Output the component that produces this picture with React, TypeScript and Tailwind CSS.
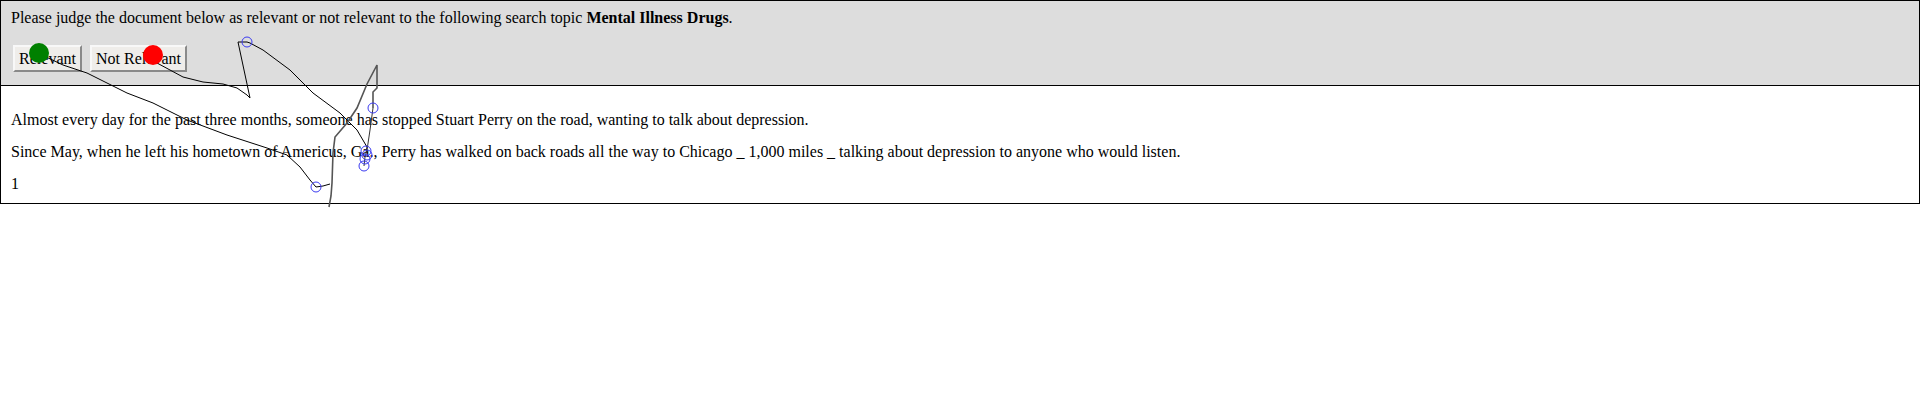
import React from "react";

type Point = [number, number];

const trails: { points: Point[]; className: string }[] = [
  {
    points: [
      [39, 53], [42, 55], [63, 65], [87, 73], [127, 93], [153, 103], [187, 120],
      [227, 135], [267, 148], [287, 155], [300, 167], [310, 180], [316, 187],
    ],
    className: "stroke-black",
  },
  {
    points: [
      [153, 55], [157, 63], [170, 70], [183, 77], [203, 82], [223, 84], [237, 88],
      [247, 95], [250, 98], [238, 42], [247, 42],
    ],
    className: "stroke-black",
  },
  {
    points: [
      [247, 42], [250, 43], [263, 50], [290, 70], [313, 93], [340, 113], [357, 130],
      [367, 147], [366, 153],
    ],
    className: "stroke-black",
  },
  {
    points: [[316, 187], [323, 186], [330, 184]],
    className: "stroke-black",
  },
  {
    points: [
      [329, 207], [331, 196], [332, 183], [333, 153], [335, 137], [347, 123],
      [357, 108], [367, 84], [377, 65], [377, 88], [373, 92], [373, 108],
    ],
    className: "stroke-[#555555]",
  },
  {
    points: [[373, 108], [370, 130], [367, 150], [365, 157], [364, 166]],
    className: "stroke-[#333333]",
  },
];

const stops: Point[] = [
  [247, 42],
  [373, 108],
  [316, 187],
  [366, 151],
  [367, 155],
  [365, 159],
  [364, 166],
];

function MouseTrail() {
  return (
    <svg
      className="pointer-events-none absolute top-0 left-0"
      width={1920}
      height={400}
      viewBox="0 0 1920 400"
    >
      {trails.map((trail, index) => (
        <polyline
          key={index}
          points={trail.points.map((p) => p.join(",")).join(" ")}
          fill="none"
          strokeWidth={index === 4 ? 1.6 : 1}
          className={trail.className}
        />
      ))}
      {stops.map(([cx, cy], index) => (
        <circle key={index} cx={cx} cy={cy} r={5} fill="none" stroke="#3b3bf0" strokeWidth={1} />
      ))}
      <circle cx={39} cy={53} r={10} fill="#008000" />
      <circle cx={153} cy={55} r={10} fill="#ff0000" />
    </svg>
  );
}

const buttonClass =
  "h-[27px] border-[2px] border-t-[#f8f8f8] border-r-[#8a8a8a] border-b-[#8a8a8a] border-l-[#f8f8f8] bg-[#efedea] px-0 text-center leading-[18px]";

export default function App() {
  return (
    <div className="relative h-[400px] w-[1920px] bg-white font-['Liberation_Serif','Times_New_Roman',serif] text-[16px] text-black">
      <div className="border border-black bg-[#dddddd] px-[10px] pt-[8px] pb-[13px]">
        <p className="leading-[18px]">
          Please judge the document below as relevant or not relevant to the following search topic{" "}
          <b>Mental Illness Drugs</b>.
        </p>
        <div className="mt-[18px] flex gap-[8px] pl-[2px]">
          <button type="button" className={`${buttonClass} w-[69px]`}>
            Relevant
          </button>
          <button type="button" className={`${buttonClass} w-[97px]`}>
            Not Relevant
          </button>
        </div>
      </div>
      <div className="border-x border-b border-black px-[10px] pt-[25px] pb-[10px]">
        <p className="mb-[14px] leading-[18px]">
          Almost every day for the past three months, someone has stopped Stuart Perry on the road, wanting to talk about depression.
        </p>
        <p className="mb-[14px] leading-[18px]">
          Since May, when he left his hometown of Americus, Ga., Perry has walked on back roads all the way to Chicago _ 1,000 miles _ talking about depression to anyone who would listen.
        </p>
        <p className="leading-[18px]">1</p>
      </div>
      <MouseTrail />
    </div>
  );
}
